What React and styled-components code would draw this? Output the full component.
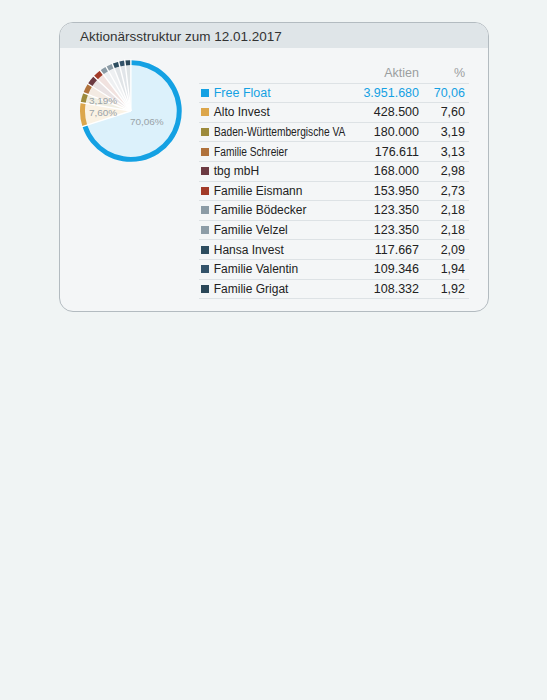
import React from 'react';
import styled, { createGlobalStyle } from 'styled-components';

const GlobalStyle = createGlobalStyle`
  html, body {
    margin: 0;
    padding: 0;
    background: #f0f4f4;
    font-family: "Liberation Sans", Arial, sans-serif;
  }
  body {
    min-height: 700px;
  }
`;

const Page = styled.div`
  padding: 22px 0 0 59px;
`;

const Card = styled.div`
  width: 430px;
  box-sizing: border-box;
  border: 1.5px solid #b3bbc0;
  border-radius: 14px;
  background: #f4f6f7;
  overflow: hidden;
`;

const CardHeader = styled.div`
  height: 25px;
  display: flex;
  align-items: center;
  padding: 1px 0 0 20px;
  box-sizing: border-box;
  background: #dfe5e8;
  color: #333;
  font-size: 13.5px;
`;

const CardBody = styled.div`
  display: flex;
  align-items: flex-start;
  gap: 16px;
  padding: 11px 19px 12px 19px;
`;

const Table = styled.div`
  width: 271px;
  margin-top: 5px;
`;

const Row = styled.div`
  display: grid;
  grid-template-columns: minmax(0, 1fr) 80px 46px;
  align-items: center;
  height: 19.6px;
  padding-right: 4px;
  box-sizing: border-box;
  border-bottom: 1px solid #dde2e5;
  color: ${(p) => p.$color || '#222'};
  font-size: 12.5px;
`;

const HeadRow = styled(Row)`
  color: #9b9ea0;
  font-size: 12.5px;
`;

const Name = styled.div`
  display: flex;
  align-items: center;
  gap: 5px;
  padding-left: 2px;
  white-space: nowrap;
  font-size: ${(p) => (p.$big ? '12.5px' : '12px')};
`;

const Label = styled.span`
  display: inline-block;
  transform: ${(p) => (p.$condensed ? 'scaleX(0.85)' : 'none')};
  transform-origin: left center;
`;

const Swatch = styled.span`
  width: 8px;
  height: 8px;
  flex: none;
  background: ${(p) => p.$color};
`;

const Num = styled.div`
  text-align: right;
`;

const holders = [
  { name: 'Free Float', shares: '3.951.680', pct: 70.06, color: '#14a1e3' },
  { name: 'Alto Invest', shares: '428.500', pct: 7.6, color: '#dca64b' },
  { name: 'Baden-Württembergische VA', shares: '180.000', pct: 3.19, color: '#9c8a3c', condensed: true },
  { name: 'Familie Schreier', shares: '176.611', pct: 3.13, color: '#b0723c', condensed: true },
  { name: 'tbg mbH', shares: '168.000', pct: 2.98, color: '#6c3a42' },
  { name: 'Familie Eismann', shares: '153.950', pct: 2.73, color: '#a23a28' },
  { name: 'Familie Bödecker', shares: '123.350', pct: 2.18, color: '#8b9ba5' },
  { name: 'Familie Velzel', shares: '123.350', pct: 2.18, color: '#8d9da7' },
  { name: 'Hansa Invest', shares: '117.667', pct: 2.09, color: '#2d4d5f' },
  { name: 'Familie Valentin', shares: '109.346', pct: 1.94, color: '#33536a' },
  { name: 'Familie Grigat', shares: '108.332', pct: 1.92, color: '#2a4758' },
];

const fmt = (n) => n.toFixed(2).replace('.', ',');

const C = 52;
const R = 51;
const RI = 46;

const pt = (r, a) => [C + r * Math.cos(a), C + r * Math.sin(a)];

const Pie = () => {
  const total = holders.reduce((s, h) => s + h.pct, 0);
  let a = -Math.PI / 2;
  const slices = holders.map((h) => {
    const a0 = a;
    const a1 = a + (h.pct / total) * Math.PI * 2;
    a = a1;
    const large = a1 - a0 > Math.PI ? 1 : 0;
    const [x0, y0] = pt(R, a0);
    const [x1, y1] = pt(R, a1);
    const [xi0, yi0] = pt(RI, a0);
    const [xi1, yi1] = pt(RI, a1);
    return {
      ...h,
      a0,
      wedge: `M${C} ${C} L${x0} ${y0} A${R} ${R} 0 ${large} 1 ${x1} ${y1} Z`,
      band: `M${x0} ${y0} A${R} ${R} 0 ${large} 1 ${x1} ${y1} L${xi1} ${yi1} A${RI} ${RI} 0 ${large} 0 ${xi0} ${yi0} Z`,
    };
  });
  return (
    <svg width="104" height="104" viewBox="0 0 104 104">
      <circle cx={C} cy={C} r={R} fill="#fff" />
      {slices.map((s) => (
        <path key={s.name + 'w'} d={s.wedge} fill={s.color} fillOpacity="0.15" />
      ))}
      {slices.map((s) => (
        <path key={s.name + 'b'} d={s.band} fill={s.color} />
      ))}
      {slices.map((s) => {
        const [x, y] = pt(R + 1, s.a0);
        return <line key={s.name + 'l'} x1={C} y1={C} x2={x} y2={y} stroke="#fff" strokeWidth="1.4" />;
      })}
      <g fill="#9aa3a8" fontSize="10" fontFamily="Liberation Sans, Arial, sans-serif">
        <text x="68" y="66" textAnchor="middle">70,06%</text>
        <text x="10" y="45">3,19%</text>
        <text x="10" y="57">7,60%</text>
      </g>
    </svg>
  );
};

const App = () => (
  <>
    <GlobalStyle />
    <Page>
      <Card>
        <CardHeader>Aktionärsstruktur zum 12.01.2017</CardHeader>
        <CardBody>
          <Pie />
          <Table>
            <HeadRow>
              <div />
              <Num>Aktien</Num>
              <Num>%</Num>
            </HeadRow>
            {holders.map((h, i) => (
              <Row key={h.name} $color={i === 0 ? h.color : undefined}>
                <Name $big={i === 0}>
                  <Swatch $color={h.color} />
                  <Label $condensed={h.condensed}>{h.name}</Label>
                </Name>
                <Num>{h.shares}</Num>
                <Num>{fmt(h.pct)}</Num>
              </Row>
            ))}
          </Table>
        </CardBody>
      </Card>
    </Page>
  </>
);

export default App;
